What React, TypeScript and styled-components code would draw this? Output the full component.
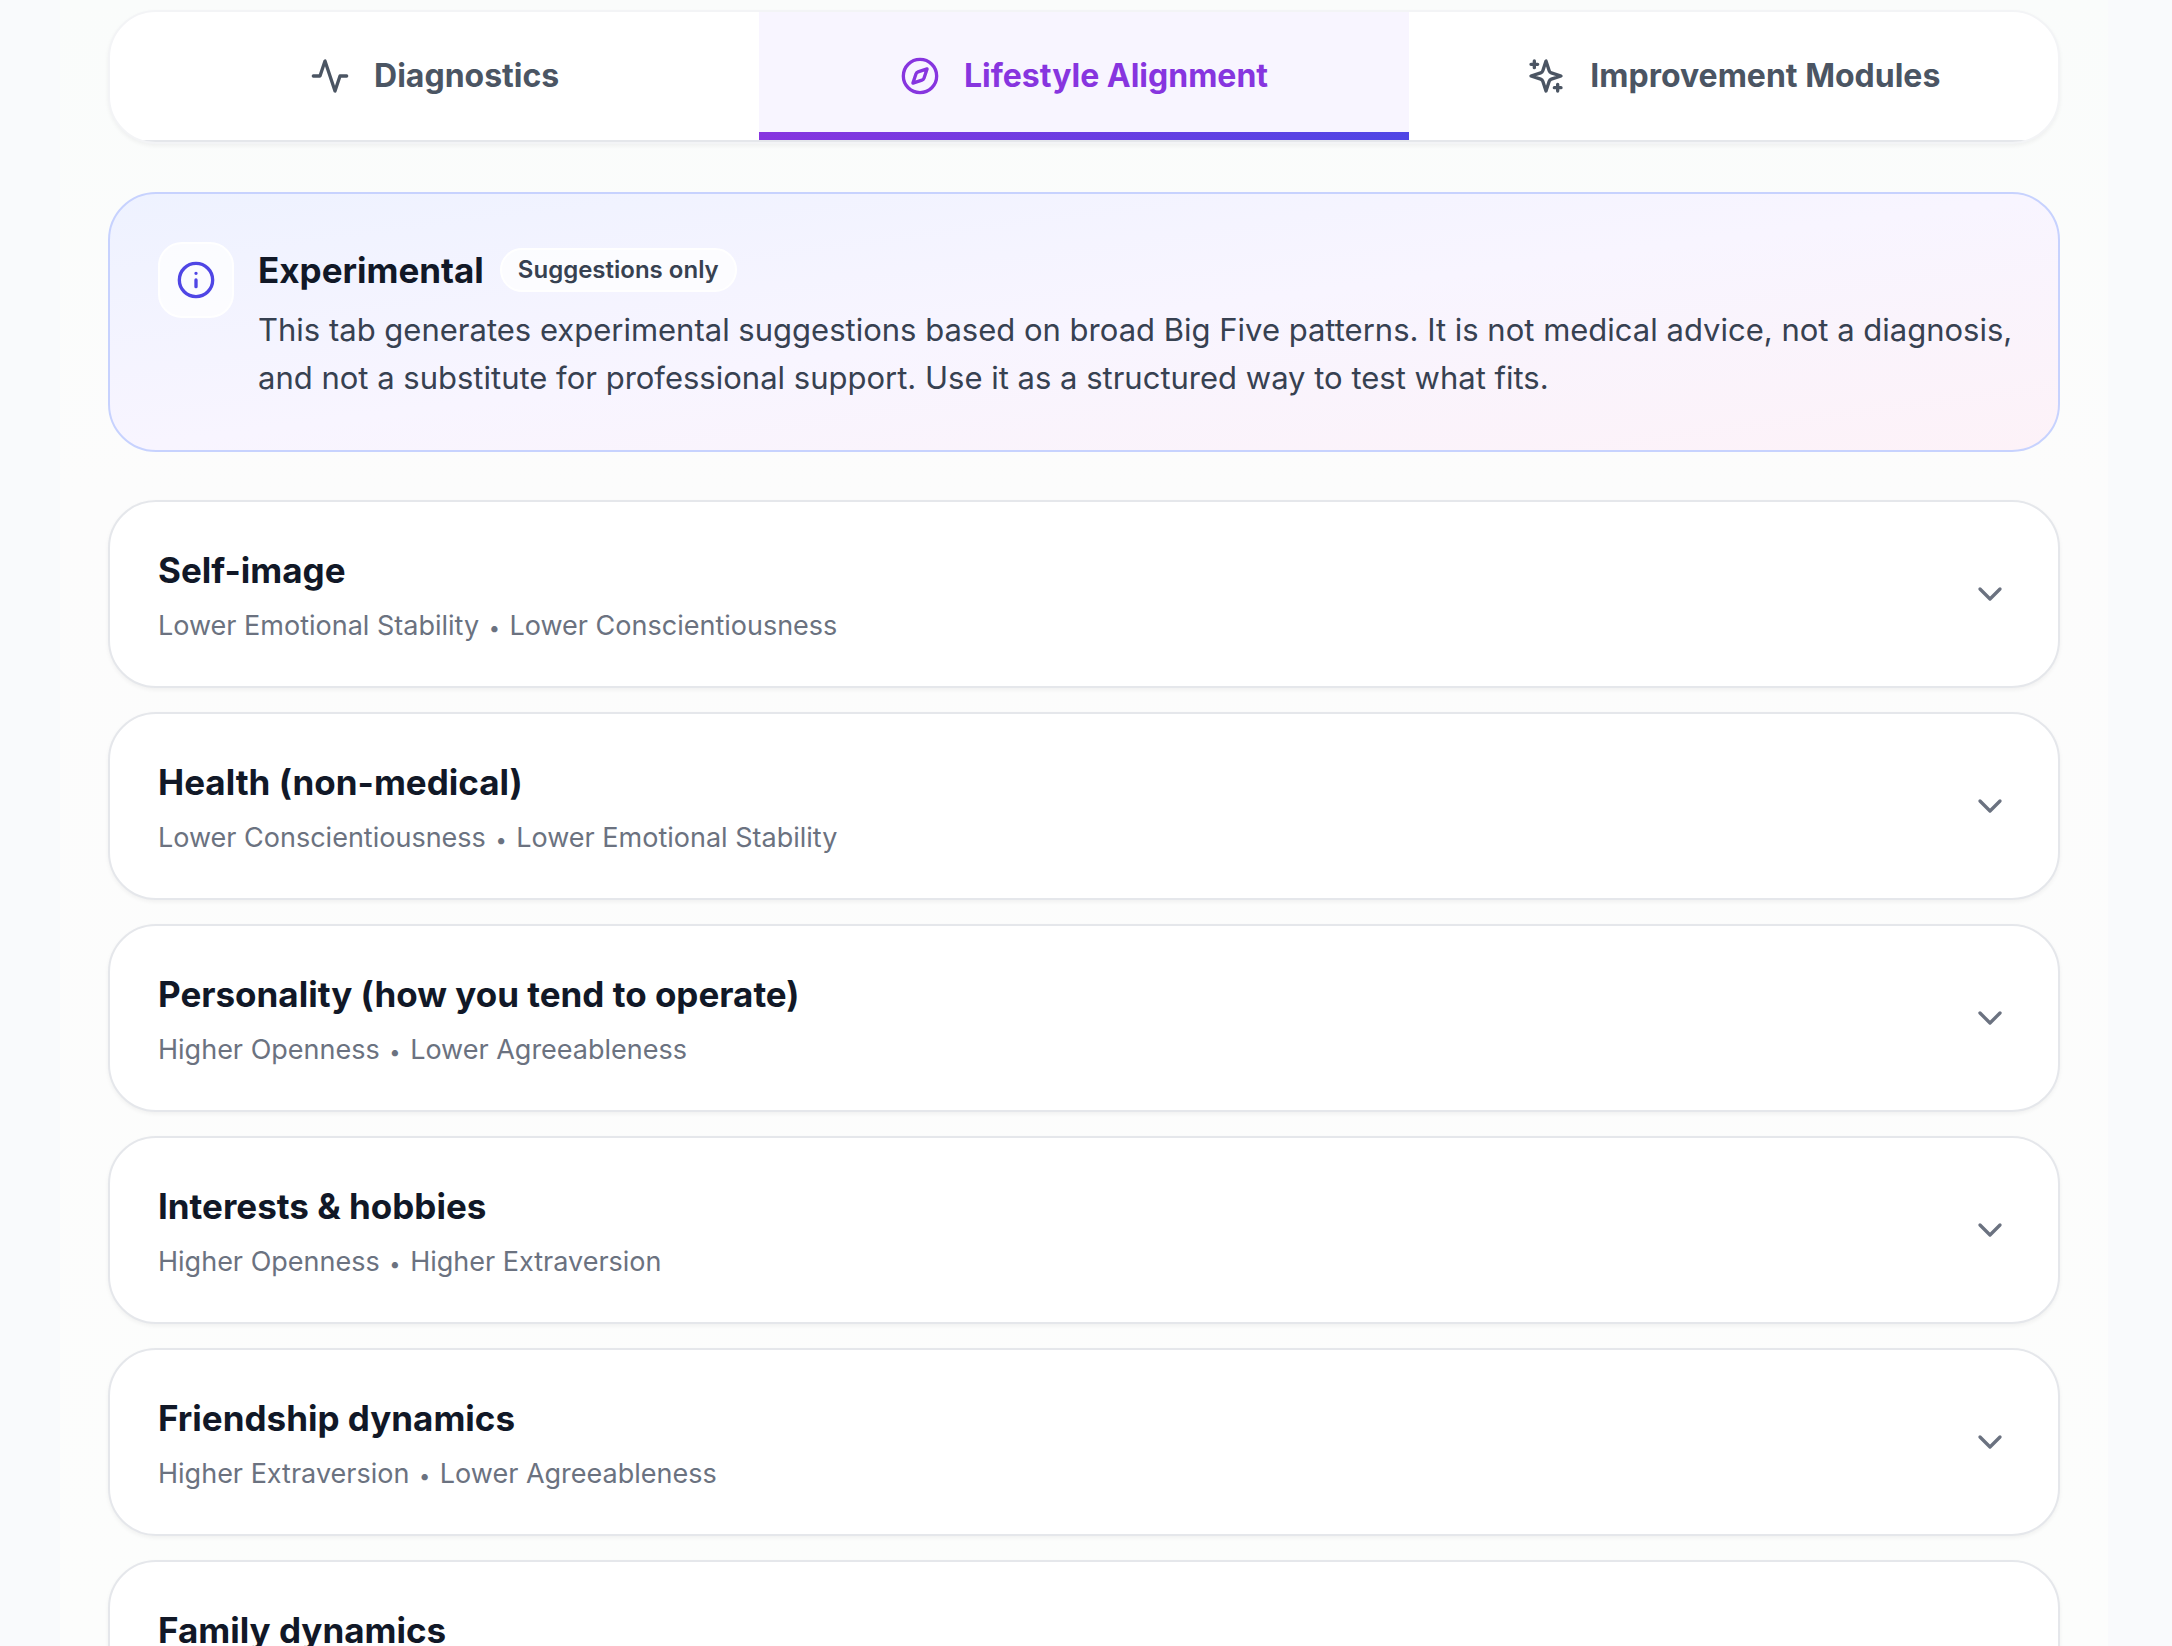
import React, { Fragment, useState } from "react";
import styled, { createGlobalStyle } from "styled-components";

const GlobalStyle = createGlobalStyle`
  *, *::before, *::after { box-sizing: border-box; }
  body {
    margin: 0;
    padding-right: 4px;
    background: #f9fafc;
    color: #111827;
    font-family: Inter, "Liberation Sans", sans-serif;
    -webkit-font-smoothing: antialiased;
    overflow: hidden;
  }
  h2, h3, p { margin: 0; }
  button { font: inherit; color: inherit; border: 0; background: none; cursor: pointer; }
`;

const Page = styled.main`
  max-width: 2048px;
  height: 100vh;
  overflow: hidden;
  margin: 0 auto;
  padding: 10px 48px 0;
  display: flex;
  flex-direction: column;
  gap: 48px;
  background: linear-gradient(180deg, #fafcfb 0%, #fcfcfc 30%, #fcfdfc 100%);
`;

const TabCard = styled.nav`
  flex: none;
  border: 2px solid #f3f4f6;
  border-radius: 48px;
  overflow: hidden;
  background: #ffffff;
  box-shadow: 0 2px 4px rgba(0, 0, 0, 0.05);
`;

const TabList = styled.div`
  display: grid;
  grid-template-columns: repeat(3, 1fr);
  border-bottom: 2px solid #e5e7eb;
`;

const Tab = styled.button<{ $active: boolean }>`
  position: relative;
  display: flex;
  align-items: center;
  justify-content: center;
  gap: 24px;
  padding: 40px 48px;
  font-size: 32px;
  line-height: 48px;
  font-weight: 700;
  color: ${(p) => (p.$active ? "#8735df" : "#4b5563")};
  background: ${(p) => (p.$active ? "#f8f5ff" : "transparent")};

  &::after {
    content: "";
    display: ${(p) => (p.$active ? "block" : "none")};
    position: absolute;
    inset: auto 0 0;
    height: 8px;
    background: linear-gradient(90deg, #8735df, #4f46e5);
  }
`;

const Notice = styled.section`
  flex: none;
  display: flex;
  align-items: flex-start;
  gap: 24px;
  padding: 48px 40px 48px 48px;
  border: 2px solid #c7d2fe;
  border-radius: 48px;
  background: linear-gradient(to bottom right, #eef2ff, #f8f5ff 50%, #fdf2f8);
`;

const NoticeIcon = styled.div`
  flex: none;
  display: grid;
  place-items: center;
  width: 76px;
  height: 76px;
  border: 2px solid #ffffff;
  border-radius: 24px;
  background: rgba(255, 255, 255, 0.7);
  color: #4f46e5;
`;

const NoticeBody = styled.div`
  display: flex;
  flex-direction: column;
  gap: 8px;
`;

const NoticeHead = styled.div`
  display: flex;
  align-items: center;
  gap: 16px;
`;

const Title = styled.h2`
  font-size: 35px;
  line-height: 56px;
  font-weight: 700;
  color: #111827;
`;

const Pill = styled.span`
  padding: 4px 16px;
  border: 2px solid #ffffff;
  border-radius: 999px;
  background: rgba(255, 255, 255, 0.7);
  font-size: 24px;
  line-height: 32px;
  font-weight: 600;
  color: #374151;
`;

const NoticeText = styled.p`
  font-size: 31px;
  line-height: 48px;
  color: #374151;
`;

const CardList = styled.div`
  flex: none;
  display: flex;
  flex-direction: column;
  gap: 24px;
`;

const Card = styled.button`
  display: flex;
  align-items: center;
  justify-content: space-between;
  padding: 40px 48px;
  border: 2px solid #e5e7eb;
  border-radius: 48px;
  background: #ffffff;
  box-shadow: 0 2px 4px rgba(0, 0, 0, 0.05);
  text-align: left;
`;

const CardText = styled.span`
  display: flex;
  flex-direction: column;
  gap: 8px;
`;

const CardTitle = styled(Title).attrs({ as: "span" })``;

const CardMeta = styled.span`
  min-height: 40px;
  font-size: 27px;
  line-height: 40px;
  color: #6b7280;
`;

const Bullet = styled.span`
  padding: 0 2px;
  font-size: 20px;
  line-height: 1;
  vertical-align: middle;
`;

const Icon = styled.svg.attrs({
  viewBox: "0 0 24 24",
  fill: "none",
  stroke: "currentColor",
  strokeWidth: 2,
  strokeLinecap: "round",
  strokeLinejoin: "round",
  "aria-hidden": true,
})`
  flex: none;
  width: 40px;
  height: 40px;
`;

const Chevron = styled(Icon)`
  color: #6b7280;
`;

const ActivityIcon = () => (
  <Icon>
    <path d="M22 12h-4l-3 9L9 3l-3 9H2" />
  </Icon>
);

const CompassIcon = () => (
  <Icon>
    <circle cx="12" cy="12" r="10" />
    <path d="m16.24 7.76-1.804 5.411a2 2 0 0 1-1.265 1.265L7.76 16.24l1.804-5.411a2 2 0 0 1 1.265-1.265z" />
  </Icon>
);

const SparklesIcon = () => (
  <Icon>
    <path d="m12 3-1.912 5.813a2 2 0 0 1-1.275 1.275L3 12l5.813 1.912a2 2 0 0 1 1.275 1.275L12 21l1.912-5.813a2 2 0 0 1 1.275-1.275L21 12l-5.813-1.912a2 2 0 0 1-1.275-1.275L12 3Z" />
    <path d="M5 3v4M19 17v4M3 5h4M17 19h4" />
  </Icon>
);

const tabs = [
  { label: "Diagnostics", Glyph: ActivityIcon },
  { label: "Lifestyle Alignment", Glyph: CompassIcon },
  { label: "Improvement Modules", Glyph: SparklesIcon },
];

const cards = [
  { title: "Self-image", traits: ["Lower Emotional Stability", "Lower Conscientiousness"] },
  { title: "Health (non-medical)", traits: ["Lower Conscientiousness", "Lower Emotional Stability"] },
  { title: "Personality (how you tend to operate)", traits: ["Higher Openness", "Lower Agreeableness"] },
  { title: "Interests & hobbies", traits: ["Higher Openness", "Higher Extraversion"] },
  { title: "Friendship dynamics", traits: ["Higher Extraversion", "Lower Agreeableness"] },
  { title: "Family dynamics", traits: [] },
];

export default function App() {
  const [active, setActive] = useState(1);

  return (
    <>
      <GlobalStyle />
      <Page>
        <TabCard>
          <TabList role="tablist">
            {tabs.map(({ label, Glyph }, i) => (
              <Tab
                key={label}
                type="button"
                role="tab"
                aria-selected={i === active}
                $active={i === active}
                onClick={() => setActive(i)}
              >
                <Glyph />
                {label}
              </Tab>
            ))}
          </TabList>
        </TabCard>

        <Notice>
          <NoticeIcon>
            <Icon>
              <circle cx="12" cy="12" r="10" />
              <path d="M12 16v-4M12 8h.01" />
            </Icon>
          </NoticeIcon>
          <NoticeBody>
            <NoticeHead>
              <Title>Experimental</Title>
              <Pill>Suggestions only</Pill>
            </NoticeHead>
            <NoticeText>
              This tab generates experimental suggestions based on broad Big Five patterns. It is not medical
              advice, not a diagnosis, and not a substitute for professional support. Use it as a structured way
              to test what fits.
            </NoticeText>
          </NoticeBody>
        </Notice>

        <CardList>
          {cards.map((card) => (
            <Card key={card.title} type="button" aria-expanded={false}>
              <CardText>
                <CardTitle>{card.title}</CardTitle>
                <CardMeta>
                  {card.traits.map((trait, i) => (
                    <Fragment key={trait}>
                      {i > 0 && (
                        <>
                          {" "}
                          <Bullet>•</Bullet>{" "}
                        </>
                      )}
                      {trait}
                    </Fragment>
                  ))}
                </CardMeta>
              </CardText>
              <Chevron>
                <path d="m6 9 6 6 6-6" />
              </Chevron>
            </Card>
          ))}
        </CardList>
      </Page>
    </>
  );
}
